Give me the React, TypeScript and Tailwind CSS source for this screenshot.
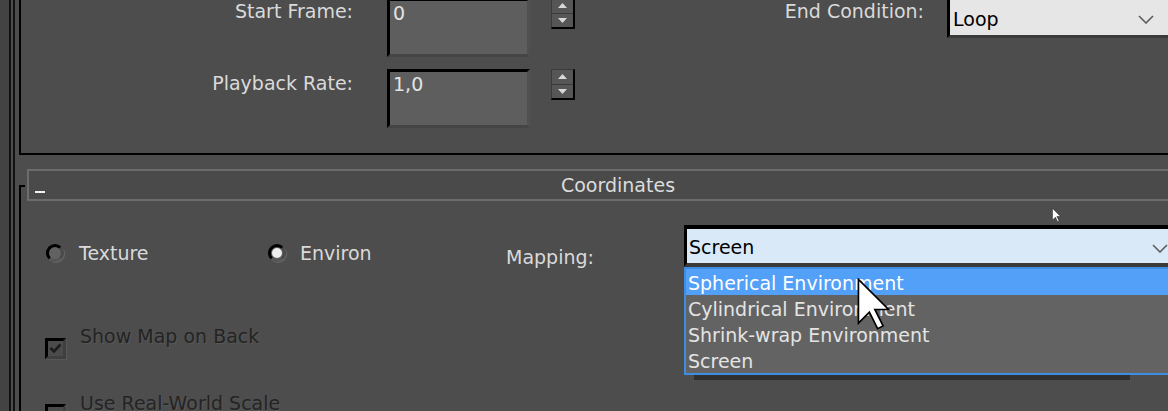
import React from 'react';

const listItems = [
  'Spherical Environment',
  'Cylindrical Environment',
  'Shrink-wrap Environment',
  'Screen',
];

function Spinner() {
  return (
    <div className="w-[24px] h-[31px] flex flex-col border-l border-t border-r-2 border-b-2 border-l-[#3a3a3a] border-t-[#3a3a3a] border-r-black border-b-black bg-[#565656]">
      <div className="flex-1 flex items-center justify-center border-b border-b-[#3a3a3a]">
        <svg width="9" height="5" viewBox="0 0 9 5">
          <polygon points="4.5,0 9,5 0,5" fill="#d8d8d8" />
        </svg>
      </div>
      <div className="flex-1 flex items-center justify-center">
        <svg width="9" height="5" viewBox="0 0 9 5">
          <polygon points="0,0 9,0 4.5,5" fill="#d8d8d8" />
        </svg>
      </div>
    </div>
  );
}

function Field({ value }: { value: string }) {
  return (
    <div className="w-[143px] h-[59px] shrink-0 border-[3px] border-t-black border-l-black border-r-[#505050] border-b-[#454545] bg-[#5e5e5e] pl-[3px] pt-[1px] leading-[22px] text-[#e4e4e4]">
      {value}
    </div>
  );
}

function Chevron() {
  return (
    <svg width="16" height="9" viewBox="0 0 16 9">
      <polyline points="1,1 8,8 15,1" fill="none" stroke="#5c5c5c" strokeWidth="1.6" />
    </svg>
  );
}

function Radio({ checked }: { checked?: boolean }) {
  return (
    <div className="w-[18px] h-[18px] shrink-0 rounded-full border-[3px] border-t-black border-l-black border-r-[#4a4a4a] border-b-[#555] bg-[#626262] shadow-[1px_1px_0_#666] flex items-center justify-center">
      {checked && <div className="w-[10px] h-[10px] rounded-full bg-[#ededed]" />}
    </div>
  );
}

function Checkbox({ checked }: { checked?: boolean }) {
  return (
    <div className="w-[21px] h-[21px] shrink-0 border-[3px] border-t-black border-l-black border-r-[#3f3f3f] border-b-[#3f3f3f] bg-[#4b4b4b] shadow-[1px_1px_0_#585858] flex items-center justify-center">
      {checked && (
        <svg width="13" height="11" viewBox="0 0 13 11">
          <polyline points="1.5,5 5,8.5 11.5,1.5" fill="none" stroke="#1c1c1c" strokeWidth="2.6" />
        </svg>
      )}
    </div>
  );
}

function Cursor({ w, h }: { w: number; h: number }) {
  return (
    <svg width={w} height={h} viewBox="0 0 12 19">
      <polygon
        points="0.5,0.5 0.5,16.5 4.5,12.5 7.5,18.5 9.5,17.5 6.5,11.5 11.5,11.5"
        fill="#ffffff"
        stroke="#000000"
        strokeWidth="0.6"
        strokeLinejoin="miter"
      />
    </svg>
  );
}

export default function App() {
  return (
    <div className="relative w-[1168px] h-[411px] overflow-hidden bg-[#4d4d4d] flex font-['DejaVu_Sans',sans-serif] text-[19px] text-[#dadada]">
      {/* left gutter */}
      <div className="w-[9px] shrink-0 bg-[#434343]" />
      <div className="w-[2px] shrink-0 bg-[#111]" />
      <div className="w-[2px] shrink-0" />
      <div className="w-[2px] shrink-0 bg-[#111]" />
      <div className="w-[4px] shrink-0" />

      <div className="flex-1 min-w-0 flex flex-col">
        {/* Time rollout */}
        <div className="h-[155px] shrink-0 border-l-2 border-b-2 border-black flex flex-col">
          <div className="flex items-start -mt-[2px]">
            <div className="w-[332px] shrink-0 text-right mt-[2px] leading-[22px]">Start Frame:</div>
            <div className="ml-[34px] shrink-0">
              <Field value="0" />
            </div>
            <div className="ml-[21px] shrink-0">
              <Spinner />
            </div>
            <div className="w-[349px] shrink-0 text-right mt-[2px] leading-[22px]">End Condition:</div>
            <div className="ml-[23px] -mt-[3px] w-[224px] h-[43px] shrink-0 border-t-2 border-l-[3px] border-b-[3px] border-t-black border-l-black border-b-[#3a3a3a] bg-[#e6e6e6] flex items-start justify-between">
              <span className="pt-[11px] pl-[3px] leading-[22px] text-black">Loop</span>
              <div className="mt-[18px] mr-[17px]">
                <Chevron />
              </div>
            </div>
          </div>

          <div className="flex items-start mt-[12px]">
            <div className="w-[332px] shrink-0 text-right mt-[3px] leading-[22px]">Playback Rate:</div>
            <div className="ml-[34px] shrink-0">
              <Field value="1,0" />
            </div>
            <div className="ml-[21px] shrink-0">
              <Spinner />
            </div>
          </div>
        </div>

        {/* Coordinates rollout */}
        <div className="flex flex-1 mt-[14px]">
          <div className="w-[6px] shrink-0 pt-[16px] flex">
            <div className="flex-1 border-l-2 border-t-2 border-black" />
          </div>

          <div className="ml-[2px] w-[1182px] shrink-0 flex flex-col">
            <div className="relative h-[32px] shrink-0 border-2 border-[#6c6c6c] bg-[#4a4a4a] flex items-center justify-center leading-[22px] text-[#dcdcdc]">
              <div className="absolute left-[6px] bottom-[6px] w-[10px] h-[2px] bg-[#f2f2f2]" />
              Coordinates
            </div>

            <div className="flex items-start mt-[24px] shrink-0">
              <div className="ml-[19px] w-[222px] shrink-0 mt-[17px] h-[22px] flex items-center">
                <Radio />
                <span className="ml-[15px] leading-[22px]">Texture</span>
              </div>
              <div className="w-[238px] shrink-0 mt-[17px] h-[22px] flex items-center">
                <Radio checked />
                <span className="ml-[14px] leading-[22px]">Environ</span>
              </div>
              <div className="w-[178px] shrink-0 mt-[21px] leading-[22px]">Mapping:</div>

              <div className="relative w-[501px] shrink-0">
                <div className="h-[42px] border-t-4 border-l-[3px] border-b-4 border-t-black border-l-black border-b-[#3a3a3a] bg-[#d9e9f8] flex items-start justify-between">
                  <span className="pt-[7px] pl-[2px] leading-[22px] text-black">Screen</span>
                  <div className="mt-[15px] mr-[17px]">
                    <Chevron />
                  </div>
                </div>

                {/* open list */}
                <div className="absolute left-0 top-[42px] w-full flex flex-col">
                  <div className="border-2 border-[#3d8ee2] bg-[#636363]">
                    {listItems.map((item, i) => (
                      <div
                        key={item}
                        className={
                          i === 0
                            ? 'h-[26px] leading-[28px] pl-[2px] bg-[#52a0f8] text-white'
                            : 'h-[26px] leading-[28px] pl-[2px] text-[#e4e4e4]'
                        }
                      >
                        {item}
                      </div>
                    ))}
                  </div>
                  <div className="ml-[10px] w-[436px] h-[5px] bg-[#303030]" />
                </div>
              </div>
            </div>

            <div className="flex items-start mt-[57px] ml-[18px] shrink-0">
              <div className="mt-[13px]">
                <Checkbox checked />
              </div>
              <span className="ml-[14px] leading-[22px] text-[#242424] [text-shadow:1px_1px_0_#575757]">
                Show Map on Back
              </span>
            </div>

            <div className="flex items-start mt-[33px] ml-[18px] shrink-0">
              <div className="mt-[12px]">
                <Checkbox />
              </div>
              <span className="ml-[14px] leading-[22px] text-[#242424] [text-shadow:1px_1px_0_#575757]">
                Use Real-World Scale
              </span>
            </div>
          </div>
        </div>
      </div>

      {/* mouse pointers */}
      <div className="absolute left-[1052px] top-[208px]">
        <Cursor w={9} h={14} />
      </div>
      <div className="absolute left-[857px] top-[278px]">
        <Cursor w={33} h={52} />
      </div>
    </div>
  );
}
